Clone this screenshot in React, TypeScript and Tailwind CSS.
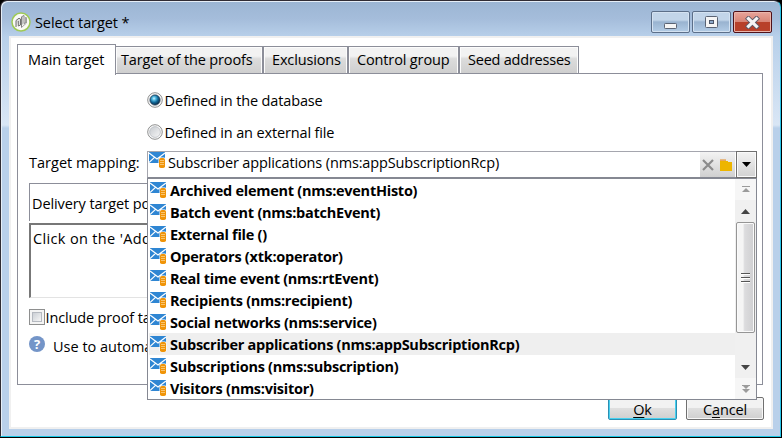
import type { ReactNode } from "react";

const mappings = [
  "Archived element (nms:eventHisto)",
  "Batch event (nms:batchEvent)",
  "External file ()",
  "Operators (xtk:operator)",
  "Real time event (nms:rtEvent)",
  "Recipients (nms:recipient)",
  "Social networks (nms:service)",
  "Subscriber applications (nms:appSubscriptionRcp)",
  "Subscriptions (nms:subscription)",
  "Visitors (nms:visitor)",
];

function MappingIcon() {
  return (
    <svg width="17" height="16" viewBox="0 0 17 16" className="block shrink-0">
      <rect width="16" height="11" fill="#2f86d3" />
      <path d="M0 1 8 7 16 1M0 10.500 5.500 5.400M16 10.500 10.500 5.400" stroke="#fff" strokeWidth="1.200" fill="none" />
      <rect x="9.500" y="5.500" width="7" height="10.500" rx="1.500" fill="#fff" />
      <rect x="10" y="6" width="6" height="10" rx="1.800" fill="#f09408" />
      <path d="M11 8.500h4M11 10.500h4M11 12.500h4" stroke="#fbd08a" strokeWidth=".8" />
    </svg>
  );
}

function AppLogo() {
  return (
    <svg width="20" height="20" viewBox="0 0 20 20" className="block">
      <circle cx="10" cy="10" r="9" fill="#fafaf7" stroke="#9fca55" strokeWidth="1.5" />
      <path d="M5 15V8.500L8 6.200l1.500.8v6L7.300 14V9" fill="#dedede" stroke="#6f6f6f" strokeWidth="1" />
      <path d="M10.500 15.500V4.800L13 3.500v8l1.800-1V5" fill="none" stroke="#828282" strokeWidth="1" />
      <path d="M11.700 5v7.500" stroke="#c4c4c4" strokeWidth="1.400" />
      <path d="M10.500 15.500 15.500 11V5.500" fill="none" stroke="#9a9a9a" strokeWidth=".9" />
    </svg>
  );
}

function Radio({ checked }: { checked?: boolean }) {
  return (
    <svg width="16" height="16" viewBox="0 0 16 16" className="block shrink-0">
      <defs>
        <radialGradient id="radioOn" cx=".4" cy=".35" r=".65">
          <stop offset="0" stopColor="#d8f6ff" />
          <stop offset=".25" stopColor="#5cc0e6" />
          <stop offset=".6" stopColor="#116a9b" />
          <stop offset="1" stopColor="#0b2c48" />
        </radialGradient>
        <linearGradient id="radioOff" x2="1" y2="1">
          <stop offset="0" stopColor="#c6cacf" />
          <stop offset="1" stopColor="#f7f7f7" />
        </linearGradient>
      </defs>
      <circle cx="8" cy="8" r="7.300" fill="#fbfbfb" stroke="#8e8f8f" />
      <circle cx="8" cy="8" r="5.400" fill="url(#radioOff)" stroke="#b9bdc2" strokeWidth=".8" />
      {checked && <circle cx="8" cy="8" r="5" fill="url(#radioOn)" stroke="#17344f" strokeWidth=".6" />}
    </svg>
  );
}

function Tab({ className, children }: { className: string; children: ReactNode }) {
  return (
    <div className={`h-[28px] border-y border-r border-[#8c8e99] bg-linear-to-b from-[#f2f2f2] from-35% via-[#dcdcdc] via-45% to-[#cfcfcf] shadow-[inset_1px_1px_0_#fcfcfc,inset_-1px_0_0_#fcfcfc] pt-px leading-[24px] whitespace-nowrap ${className}`}>
      {children}
    </div>
  );
}

function TitleButton({ close, children }: { close?: boolean; children: ReactNode }) {
  return (
    <div
      className={`flex h-[22px] w-[39px] items-center justify-center rounded-[2px] border ${
        close
          ? "border-[#4f1119] bg-linear-to-b from-[#e8a59b] from-0% via-[#d98779] via-45% to-[#c8634d] shadow-[inset_0_0_0_1px_#eab5ab,inset_0_-10px_0_#b8402a]"
          : "border-[#5c6f89] bg-linear-to-b from-[#c2d5e9] from-40% via-[#99b3d0] via-50% to-[#b3cce6] shadow-[inset_0_0_0_1px_#d4e2f1]"
      }`}
    >
      {children}
    </div>
  );
}

export default function App() {
  return (
    <div className="h-[438px] w-[782px] overflow-hidden bg-black font-['Open_Sans','Noto_Sans',sans-serif] text-[14.5px] tracking-[-0.14px] text-black">
      <div className="flex h-[437px] w-[781px] flex-col rounded-t-[7px] border border-[#302c34] border-r-[#27c4e8] border-b-[#16c6e4] bg-[linear-gradient(#9bb5d3_0px,#a5bddb_18px,#b8d0ea_36px,#d9e6f5_124px,#b9d0ea_127px)] shadow-[inset_1px_1px_0_#e6eef7]">
        <div className="flex h-[35px] shrink-0 items-start pl-[10px] pr-[8px]">
          <div className="pt-[11px]"><AppLogo /></div>
          <div className="ml-[4px] mt-[11px] leading-[22px] tracking-[-0.1px]">Select target *</div>
          <div className="ml-auto mt-[10px] flex gap-[2px]">
            <TitleButton>
              <svg width="13" height="20" viewBox="0 0 13 20"><rect x=".5" y="11.500" width="12" height="5" rx=".8" fill="#f5f5f5" stroke="#5a6373" /></svg>
            </TitleButton>
            <TitleButton>
              <svg width="13" height="12" viewBox="0 0 13 12"><rect x=".5" y=".5" width="12" height="11" rx="1" fill="#f5f5f5" stroke="#5a6373" /><rect x="4.500" y="4.500" width="4" height="3" fill="#8da9ca" stroke="#4d5668" /></svg>
            </TitleButton>
            <TitleButton close>
              <svg width="15" height="13" viewBox="0 0 15 13"><path d="M3.500 2.700 11.500 10.300M11.500 2.700 3.500 10.300" stroke="#5b5a68" strokeWidth="5" strokeLinecap="square" /><path d="M3.500 2.700 11.500 10.300M11.500 2.700 3.500 10.300" stroke="#f6f4f4" strokeWidth="3.200" strokeLinecap="square" /></svg>
            </TitleButton>
          </div>
        </div>

        <div className="relative ml-[8px] h-[393px] w-[764px] border-2 border-[#f0f0f0] bg-white">
          <div className="ml-[6px] mt-[7px] flex h-[29px] items-end">
            <div className="relative z-10 -mb-px h-[31px] w-[99px] shrink-0 border border-b-0 border-[#8c8e99] bg-white pl-[10px] pt-[2px] leading-[26px]">Main target</div>
            <Tab className="w-[147px] pl-[5px]">Target of the proofs</Tab>
            <Tab className="w-[85px] border-l pl-[8px]">Exclusions</Tab>
            <Tab className="w-[111px] border-l pl-[8px]">Control group</Tab>
            <Tab className="w-[120px] border-l pl-[8px] tracking-[-0.22px]">Seed addresses</Tab>
          </div>
          <div className="-mt-px ml-[6px] h-[312px] w-[746px] border border-[#8c8e99] pl-[11px] pt-[17px]">
            <div className="ml-[118px] flex h-[18px] items-center gap-[1.5px]"><Radio checked /><span className="pt-[2px]">Defined in the database</span></div>
            <div className="ml-[118px] mt-[14px] flex h-[18px] items-center gap-[1.5px]"><Radio /><span className="pt-[2px]">Defined in an external file</span></div>
            <div className="mt-[10px] flex">
              <div className="w-[118px] leading-[23px] tracking-[0.02px]">Target mapping:</div>
              <div className="flex h-[27px] w-[610px] border border-[#a5a6ae] border-b-[#858892] bg-white">
                <div className="pl-px"><MappingIcon /></div>
                <div className="ml-[2px] leading-[21px]">Subscriber applications (nms:appSubscriptionRcp)</div>
                <div className="ml-auto flex h-[25px]">
                  <div className="flex w-[15px] items-center justify-center bg-linear-to-b from-[#f3f3f3] to-[#d0d0d0]">
                    <svg width="12" height="12" viewBox="0 0 12 12"><path d="m1 1 10 10m0-10L1 11" stroke="#8b8b8b" strokeWidth="2.200" /></svg>
                  </div>
                  <div className="flex w-[20px] items-center justify-center bg-linear-to-b from-[#f3f3f3] to-[#d0d0d0] pl-[2px]">
                    <svg width="12" height="12" viewBox="0 0 12 12"><path d="M0 .5h6v1.200H0z" fill="#e58a22" /><path d="M0 2h8v1h4v9H0z" fill="#edb500" /></svg>
                  </div>
                  <div className="-my-px -mr-px ml-px flex w-[21px] items-center justify-center border border-[#707070] bg-linear-to-b from-[#f3f3f3] to-[#d2d2d2] shadow-[inset_0_0_0_1px_#fafafa]">
                    <svg width="9" height="5" viewBox="0 0 9 5"><path d="M0 0h9L4.500 5z" fill="#000" /></svg>
                  </div>
                </div>
              </div>
            </div>
            <div className="mt-[5px] h-[38px] w-[720px] border border-b-0 border-[#8c8e99] pl-[2px] pt-[9px] leading-[22px] tracking-[-0.1px]">
              <div className="w-[115px] overflow-hidden whitespace-nowrap">Delivery target po</div>
            </div>
            <div className="mt-[2px] h-[75px] w-[720px] border border-[#e3e3e3] border-t-2 border-t-[#777] border-l-2 border-l-[#777] pl-[2px] pt-[2px] leading-[24px] tracking-[0.35px]">
              <div className="w-[114px] overflow-hidden whitespace-nowrap">Click on the 'Add</div>
            </div>
            <div className="mt-[11px] flex h-[16px] items-center">
              <div className="h-[16px] w-[16px] shrink-0 border border-[#8e8f8f] bg-[#f4f4f4] p-[2px]"><div className="h-[10px] w-[10px] border border-[#b5b9c0] bg-linear-to-br from-[#cbcfd5] to-[#f6f6f6]" /></div>
              <div className="ml-[0.5px] w-[101px] overflow-hidden pt-[2px] whitespace-nowrap">Include proof ta</div>
            </div>
            <div className="mt-[11px] flex h-[18px] items-start">
              <div className="flex h-[16px] w-[16px] shrink-0 items-center justify-center rounded-full bg-[#7495c8] text-[13px] leading-none font-bold text-white">?</div>
              <div className="ml-[8px] w-[94px] overflow-hidden leading-[21px] tracking-[0px] whitespace-nowrap">Use to automa</div>
            </div>
          </div>
          <div className="ml-[597px] mt-[12px] flex gap-[9px]">
            <div className="h-[23px] w-[69px] rounded-[2px] border border-[#2c8fb3] bg-linear-to-b from-[#f2f2f2] from-45% via-[#dfdfdf] via-50% to-[#cfcfcf] text-center leading-[24px] shadow-[inset_0_0_0_1px_#46d0ef]"><u className="underline-offset-2">O</u>k</div>
            <div className="h-[23px] w-[78px] rounded-[2px] border border-[#707070] bg-linear-to-b from-[#f2f2f2] from-45% via-[#dfdfdf] via-50% to-[#cfcfcf] text-center leading-[24px] shadow-[inset_0_0_0_1px_#f7f7f7]">C<u className="underline-offset-2">a</u>ncel</div>
          </div>

          <div className="absolute left-[136px] top-[140px] z-20 flex h-[222px] w-[610px] border border-[#858892] bg-white">
            <div className="flex-1 pl-px">
              {mappings.map((m, i) => (
                <div key={m} className={`flex h-[22px] pl-px pt-[3px] ${i === 7 ? "bg-[#efefef]" : ""}`}>
                  <MappingIcon />
                  <div className="ml-[3px] whitespace-nowrap leading-[18px] font-bold tracking-[-0.26px]">{m}</div>
                </div>
              ))}
            </div>
            <div className="flex w-[21px] flex-col bg-[#f0f0f0]">
              <div className="flex h-[21px] items-center justify-center bg-[#f6f6f6]">
                <svg width="8" height="7" viewBox="0 0 8 7"><path d="M0 0h8v1H0zM4 2l4 4H0z" fill="#9b9b9b" /></svg>
              </div>
              <div className="flex h-[22px] items-center justify-center">
                <svg width="9" height="5" viewBox="0 0 9 5"><path d="M4.500 0 9 5H0z" fill="#444" /></svg>
              </div>
              <div className="ml-[1px] flex h-[111px] w-[19px] flex-col items-center justify-center gap-[2px] rounded-[2px] border border-[#959595] bg-linear-to-r from-[#f5f5f5] from-35% via-[#dcdcde] via-45% to-[#cfcfd1] shadow-[inset_0_0_0_1px_#fafafa]">
                <div className="h-[2px] w-[9px] border-b border-white bg-[#555]" />
                <div className="h-[2px] w-[9px] border-b border-white bg-[#555]" />
                <div className="h-[2px] w-[9px] border-b border-white bg-[#555]" />
              </div>
              <div className="flex flex-1 items-end justify-center pb-[8px]">
                <svg width="9" height="5" viewBox="0 0 9 5"><path d="M0 0h9L4.500 5z" fill="#444" /></svg>
              </div>
              <div className="flex h-[21px] items-center justify-center bg-[#f6f6f6]">
                <svg width="8" height="8" viewBox="0 0 8 8"><path d="M0 0h8v1H0zM1 1h6L4 4zM0 4h8L4 8z" fill="#9b9b9b" /></svg>
              </div>
            </div>
          </div>
        </div>
      </div>
    </div>
  );
}
